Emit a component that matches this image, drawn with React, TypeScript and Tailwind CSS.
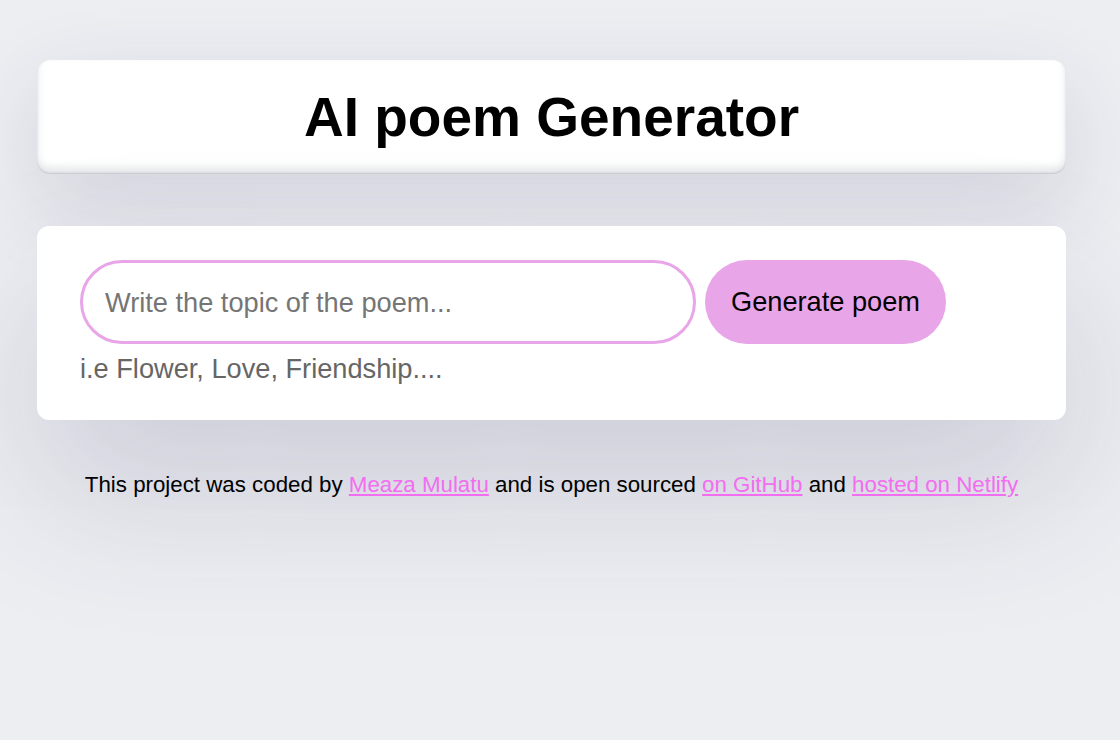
import React from "react";

export default function App() {
  return (
    <div
      className="min-h-[740px] w-full bg-[#edeef2] pt-[60px]"
      style={{ fontFamily: '"Liberation Sans", Arial, sans-serif' }}
    >
      <div className="ml-[37px] w-[1029px]">
        <header className="h-[114px] rounded-[13px] bg-white flex items-center justify-center shadow-[inset_0_-6px_9px_rgba(60,70,90,0.14),inset_0_-1px_2px_rgba(60,70,90,0.2),0_30px_90px_rgba(50,50,93,0.14)]">
          <h1 className="text-[55px] font-bold text-black leading-none">AI poem Generator</h1>
        </header>
        <main className="mt-[52px] rounded-[12px] bg-white pl-[43px] pr-[40px] pt-[34px] pb-[34px] shadow-[0_70px_150px_rgba(50,50,93,0.18)]">
          <form className="flex items-center gap-[9px]">
            <input
              type="text"
              placeholder="Write the topic of the poem..."
              className="w-[616px] h-[84px] rounded-full border-[3px] border-[#e8a5e8] bg-white pl-[22px] pt-[1px] text-[27.2px] text-black placeholder:text-[#757575] outline-none"
            />
            <button
              type="button"
              className="h-[84px] rounded-full bg-[#e8a5e8] px-[26px] pt-[1px] text-[27.2px] text-black"
            >
              Generate poem
            </button>
          </form>
          <div className="mt-[8px] text-[27.2px] text-[#666666] leading-[34px]">
            i.e Flower, Love, Friendship....
          </div>
        </main>
        <footer className="pt-[52px] pb-[20px] text-center text-[22.3px] text-black leading-[26px]">
          This project was coded by{" "}
          <a href="#" className="text-[#f36df0] underline">Meaza Mulatu</a> and is open sourced{" "}
          <a href="#" className="text-[#f36df0] underline">on GitHub</a> and{" "}
          <a href="#" className="text-[#f36df0] underline">hosted on Netlify</a>
        </footer>
      </div>
    </div>
  );
}
